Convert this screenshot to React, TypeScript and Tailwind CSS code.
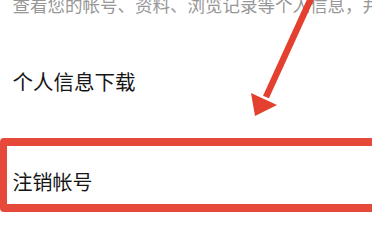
import React from 'react';

const font = { fontFamily: '"Noto Sans CJK SC", "Noto Sans", sans-serif' };

const App: React.FC = () => {
  return (
    <div className="relative w-[372px] h-[218px] overflow-hidden bg-white" style={font}>
      <div className="flex flex-col">
        {/* Intro line, cut at the top edge */}
        <p className="mt-[-4px] pl-[12.5px] text-[17.5px] leading-none text-[#979797] whitespace-nowrap">
          查看您的帐号、资料、浏览记录等个人信息，并可下载
        </p>

        <p className="mt-[57px] pl-[12.5px] text-[20.5px] leading-none text-[#151515]">
          个人信息下载
        </p>

        {/* Highlighted row */}
        <div className="mt-[47px] w-[390px] h-[74px] box-border rounded-[4px] border-[7px] border-t-[8px] border-b-[8px] border-[#e6483a] pl-[5.5px] pt-[25px]">
          <span className="text-[20px] leading-none text-[#151515]">注销帐号</span>
        </div>
      </div>

      {/* Pointer arrow */}
      <svg className="absolute inset-0 pointer-events-none" width="372" height="218" viewBox="0 0 372 218">
        <line x1="313" y1="-6" x2="266" y2="97" stroke="#e4402f" strokeWidth="6.5" />
        <polygon points="255,116 251,93 277,105" fill="#e4402f" />
      </svg>
    </div>
  );
};

export default App;
